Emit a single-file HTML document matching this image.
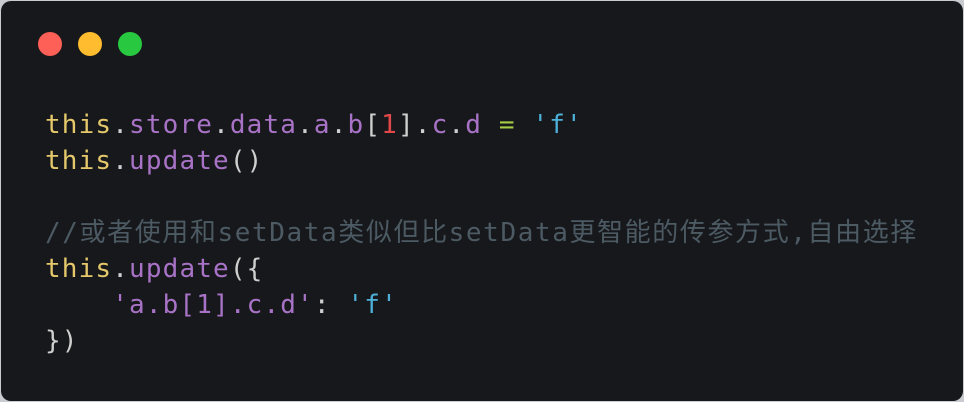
<!DOCTYPE html>
<html><head><meta charset="utf-8"><style>
html,body{margin:0;padding:0;width:964px;height:402px;background:#c8cbcf;overflow:hidden}
.card{position:absolute;left:1px;top:1px;width:962px;height:400px;background:#17181b;border-radius:10px}
.dot{position:absolute;top:31px;width:24px;height:24px;border-radius:50%}
pre{position:absolute;left:45px;top:107px;margin:0;font-family:"DejaVu Sans Mono","Noto Sans CJK SC",monospace;font-size:26px;letter-spacing:1.15px;line-height:36px;color:#d4d4d4}
.y{color:#e5c86b}.p{color:#a873c6}.w{color:#cfcfcf}.r{color:#e0484a}.g{color:#a6cc45}.c{color:#4db0d8}
.cm{color:#4c5a63;font-size:26px;letter-spacing:1.6px}
</style></head><body>
<div class="card">
<div class="dot" style="left:37px;background:#fe5f57"></div>
<div class="dot" style="left:77px;background:#febc2e"></div>
<div class="dot" style="left:117px;background:#28c840"></div>
</div>
<pre><span class="y">this</span><span class="w">.</span><span class="p">store</span><span class="w">.</span><span class="p">data</span><span class="w">.</span><span class="p">a</span><span class="w">.</span><span class="p">b</span><span class="w">[</span><span class="r">1</span><span class="w">].</span><span class="p">c</span><span class="w">.</span><span class="p">d</span> <span class="g">=</span> <span class="c">'f'</span>
<span class="y">this</span><span class="w">.</span><span class="p">update</span><span class="w">()</span>

<span class="cm">//或者使用和setData类似但比setData更智能的传参方式,自由选择</span>
<span class="y">this</span><span class="w">.</span><span class="p">update</span><span class="w">({</span>
    <span class="p">'a.b[1].c.d'</span><span class="w">:</span> <span class="c">'f'</span>
<span class="w">})</span></pre>
</body></html>
